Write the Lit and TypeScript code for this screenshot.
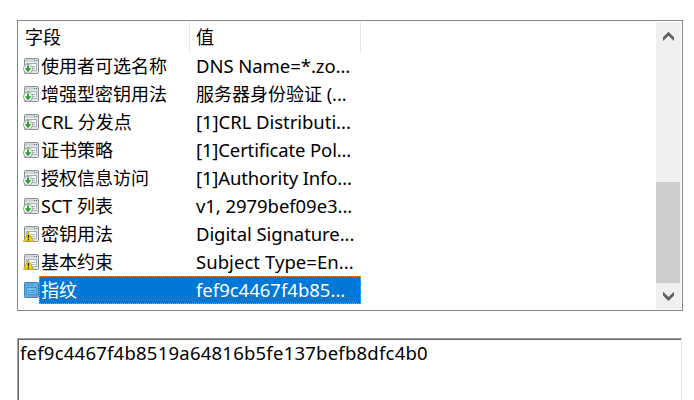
import { LitElement, html, css, svg } from "lit";
import { customElement, property } from "lit/decorators.js";

type Kind = "extension" | "critical" | "property";
interface Field { kind: Kind; name: string; value: string; spacing: number; cjk?: boolean; selected?: boolean }

const FIELDS: Field[] = [
  { kind: "extension", name: "使用者可选名称", value: "DNS Name=*.zo...", spacing: -0.06 },
  { kind: "extension", name: "增强型密钥用法", value: "服务器身份验证 (...", spacing: 0, cjk: true },
  { kind: "extension", name: "CRL 分发点", value: "[1]CRL Distributi...", spacing: -0.05 },
  { kind: "extension", name: "证书策略", value: "[1]Certificate Pol...", spacing: -0.15 },
  { kind: "extension", name: "授权信息访问", value: "[1]Authority Info...", spacing: -0.15 },
  { kind: "extension", name: "SCT 列表", value: "v1, 2979bef09e3...", spacing: -0.06 },
  { kind: "critical", name: "密钥用法", value: "Digital Signature...", spacing: -0.08 },
  { kind: "critical", name: "基本约束", value: "Subject Type=En...", spacing: 0.05 },
  { kind: "property", name: "指纹", value: "fef9c4467f4b85...", spacing: 0, selected: true },
];

@customElement("field-icon")
export class FieldIcon extends LitElement {
  @property() kind: Kind = "extension";

  static styles = css`
    :host { display: block; width: 16px; height: 16px; }
    svg { display: block; }
  `;

  render() {
    const on = this.kind === "property";
    const edge = on ? "#3b83b8" : "#8a8f94";
    const line = on ? "#3e8fcb" : "#a9b1b8";
    return html`<svg width="16" height="16" viewBox="0 0 16 16">
      <rect x="1.5" y=".5" width="14" height="15" rx=".8" fill=${on ? "#65b1e6" : "#e4e7ea"} stroke=${edge}></rect>
      <path d="M2 2.5H15" stroke=${on ? "#56a3db" : "#c9ced3"} stroke-width="2"></path>
      <path d="M11 2.5h1M13 2.5h1" stroke=${on ? "#8fcbf2" : "#70777d"}></path>
      <rect x="3.5" y="5.5" width="10" height="7" fill=${on ? "#74bcec" : "#fafbfc"} stroke=${line}></rect>
      <path d="M5 8.5h2M8 8.5h4M5 10.5h2M8 10.5h4" stroke=${line}></path>
      ${on ? svg`<path d="M7 14h1M9 14h1M11 14h3" stroke="#3e8fcb"></path>` : null}
      ${this.kind === "extension" ? svg`
        <circle cx="5" cy="10.8" r="4.5" fill="#fafcfa" stroke="#8e9691" stroke-width=".9"></circle>
        <path d="M4 7.4h2v2.8h2.4L5 14.2 1.6 10.2H4z" fill="#27a822"></path>` : null}
      ${this.kind === "critical" ? svg`
        <path d="M5.3 5.9 10.6 15.3H.4z" fill="#f5d51c" stroke="#c5a414" stroke-width=".9" stroke-linejoin="round"></path>
        <path d="M5.4 9v3.2M5.4 13.1v1.3" stroke="#29240c" stroke-width="1.3"></path>` : null}
    </svg>`;
  }
}

@customElement("app-root")
export class AppRoot extends LitElement {
  static styles = css`
    :host {
      display: flex; flex-direction: column; gap: 27px; box-sizing: border-box;
      height: 400px; padding: 20px 11px 0 17px; overflow: hidden; background: #fff; color: #000;
      font: 400 18px/28px "Noto Sans", "Noto Sans CJK SC", sans-serif;
    }
    .list { display: flex; flex: none; box-sizing: border-box; height: 291px; border: 1px solid #828790; padding: 1px; }
    .table { flex: 1; min-width: 0; }
    .header { display: grid; grid-template-columns: 171px 171px; height: 30px; line-height: 30px; }
    .header span { box-sizing: border-box; border-right: 1px solid #e5e5e5; padding-left: 6px; }
    .row { display: grid; grid-template-columns: 16px 322px; height: 28px; padding-left: 4px; align-items: center; }
    .cells { display: grid; grid-template-columns: 151px 1fr; box-sizing: border-box; height: 28px; padding-left: 2px; white-space: pre; }
    .value { padding-left: 4px; font-size: 18.5px; }
    .value.cjk { font-size: 18px; }
    .selected .cells { background: #0078d7; color: #fff; outline: 1px dotted #ff8728; outline-offset: -1px; }
    .scroll { display: flex; flex-direction: column; justify-content: space-between; width: 25px; background: #f0f0f0; }
    .scroll svg { display: block; flex: none; }
    .track { flex: 1; display: flex; align-items: flex-end; }
    .thumb { width: 24px; height: 101px; background: #cdcdcd; }
    .detail {
      flex: none; box-sizing: border-box; height: 80px; width: 665px; padding: 1px 0 0 2px;
      border: 1px solid #a0a0a0; border-right-color: #e3e3e3; box-shadow: inset 1px 1px #696969;
      white-space: pre; font-size: 18.5px; line-height: 26px; letter-spacing: .23px;
    }
  `;

  render() {
    return html`
      <div class="list">
        <div class="table">
          <div class="header"><span>字段</span><span>值</span></div>
          ${FIELDS.map((f) => html`
            <div class="row ${f.selected ? "selected" : ""}">
              <field-icon .kind=${f.kind}></field-icon>
              <div class="cells">
                <span>${f.name}</span>
                <span class="value ${f.cjk ? "cjk" : ""}" style="letter-spacing:${f.spacing}px">${f.value}</span>
              </div>
            </div>`)}
        </div>
        <div class="scroll">
          <svg width="25" height="26" viewBox="0 0 25 26"><path d="M12.5 9.8 18 15.3V19l-5.5-5.2L7 19v-3.7z" fill="#606060"></path></svg>
          <div class="track"><div class="thumb"></div></div>
          <svg width="25" height="26" viewBox="0 0 25 26"><path d="M12.5 17.9 18 12.4V8.7l-5.5 5.2L7 8.7v3.7z" fill="#606060"></path></svg>
        </div>
      </div>
      <div class="detail">fef9c4467f4b8519a64816b5fe137befb8dfc4b0</div>`;
  }
}
